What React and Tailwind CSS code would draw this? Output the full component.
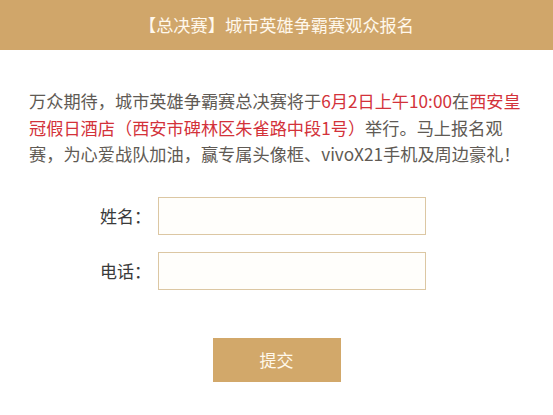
import React from 'react';

export default function App() {
  return (
    <div className="w-[553px] h-[415px] bg-white font-['Noto_Sans_CJK_SC',sans-serif]">

      {/* header */}
      <header className="h-[50px] bg-[#d0a66a] flex items-center justify-center">
        <h1 className="text-[17.2px] text-[#fff8ec]">【总决赛】城市英雄争霸赛观众报名</h1>
      </header>

      {/* intro */}
      <p className="mt-[38px] pl-[29px] text-[17.2px] leading-[26.5px] text-[#605a54] whitespace-nowrap">
        万众期待，城市英雄争霸赛总决赛将于<span className="text-[#d3323a]">6月2日上午10:00</span>在<span className="text-[#d3323a]">西安皇</span>
        <br />
        <span className="text-[#d3323a]">冠假日酒店（西安市碑林区朱雀路中段1号）</span>举行。马上报名观
        <br />
        赛，为心爱战队加油，赢专属头像框、vivoX21手机及周边豪礼！
      </p>

      {/* form */}
      <form className="mt-[29px] flex flex-col gap-[17px]" onSubmit={(e) => e.preventDefault()}>
        <div className="flex items-center pl-[100px] gap-[7px]">
          <label className="w-[51px] text-[17px] text-[#3a3a3a]">姓名：</label>
          <input className="w-[268px] h-[38px] border border-[#dcc7a3] bg-[#fffefb] outline-none px-2" />
        </div>
        <div className="flex items-center pl-[100px] gap-[7px]">
          <label className="w-[51px] text-[17px] text-[#3a3a3a]">电话：</label>
          <input className="w-[268px] h-[38px] border border-[#dcc7a3] bg-[#fffefb] outline-none px-2" />
        </div>

        <div className="flex justify-center mt-[31px]">
          <button className="w-[128px] h-[44px] bg-[#d2a86a] text-[17px] text-[#fff8ec]">提交</button>
        </div>
      </form>

    </div>
  );
}
